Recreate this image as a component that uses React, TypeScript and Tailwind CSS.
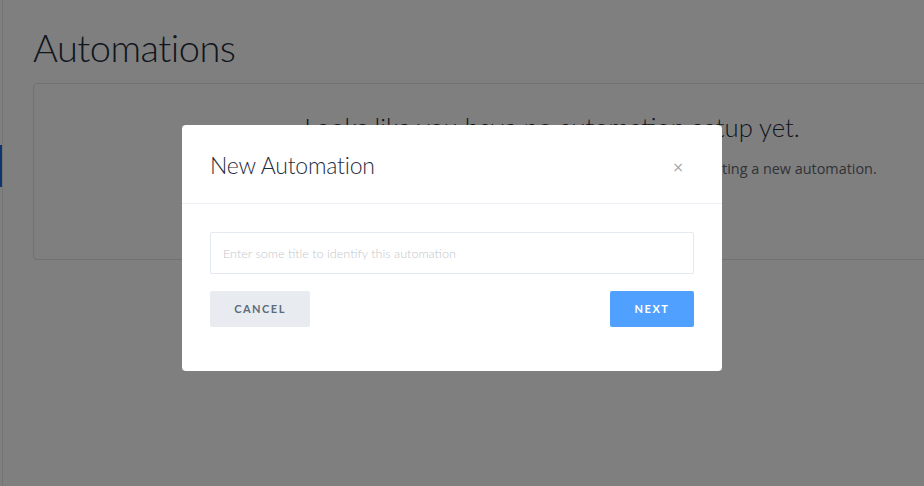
import React from "react";

export default function App() {
  const dosis = { fontFamily: "Lato, 'Noto Sans', sans-serif" };
  return (
    <div className="relative h-[486px] w-[924px] overflow-hidden bg-white">
      {/* underlying page */}
      <div className="flex h-full">
        <div className="relative w-[3px] shrink-0 border-r border-[#e6e6e6]">
          <div className="absolute left-0 top-[145px] h-[42px] w-[2px] bg-[#1d6ae5]" />
        </div>
        <div className="flex-1 pl-[30px] pt-[20px]">
          <div className="flex items-start justify-between">
            <h1 className="text-[38px] font-light leading-[54px] tracking-[-0.5px] text-[#1f2d3d]" style={dosis}>
              Automations
            </h1>
            <div className="mt-[-6px] h-[36px] w-[26px] rounded-l-[4px] bg-[#eeeff1]" />
          </div>
          <div className="mt-[9px] h-[177px] w-[1038px] rounded-[4px] border border-[#e4e4e4] pt-[24px] text-center">
            <div className="text-[25.6px] font-light leading-[38px] text-[#1f2d3d]" style={dosis}>
              Looks like you have no automation setup yet.
            </div>
            <div className="mt-[12px] text-[14.4px] text-[#5f6670]" style={{ fontFamily: "'Open Sans', sans-serif" }}>
              Automations help you to save time on repetitive tasks. Get started by creating a new automation.
            </div>
          </div>
        </div>
      </div>

      {/* overlay */}
      <div className="absolute inset-0 bg-black/50" />

      {/* modal */}
      <div className="absolute inset-0 flex justify-start pl-[182px] pt-[125px]">
        <div className="h-[246px] w-[540px] rounded-[4px] bg-white">
          <div className="flex h-[79px] items-center justify-between border-b border-[#ebeff3] pl-[28px] pr-[38px] pt-[2px]">
            <div className="text-[23px] font-light tracking-[-0.2px] text-[#1f2d3d]" style={dosis}>
              New Automation
            </div>
            <div className="pt-[3px] text-[14px] leading-none text-[#a0a4a8]" style={{ fontFamily: "'DejaVu Sans', sans-serif" }}>
              ×
            </div>
          </div>
          <div className="px-[28px] pt-[28px]">
            <div className="flex h-[42px] items-center rounded-[2px] border border-[#e4e9ef] px-[12px] pt-[2px]">
              <span className="text-[12.6px] font-light text-[#c3c7cc]" style={dosis}>
                Enter some title to identify this automation
              </span>
            </div>
            <div className="mt-[17px] flex justify-between">
              <button
                className="h-[36px] w-[100px] rounded-[2px] bg-[#e8ebef] text-[11px] font-bold tracking-[1.5px] text-[#5d6b7b]"
                style={dosis}
              >
                CANCEL
              </button>
              <button
                className="h-[36px] w-[84px] rounded-[2px] bg-[#50a1ff] text-[11px] font-bold tracking-[1.5px] text-white"
                style={dosis}
              >
                NEXT
              </button>
            </div>
          </div>
        </div>
      </div>
    </div>
  );
}
